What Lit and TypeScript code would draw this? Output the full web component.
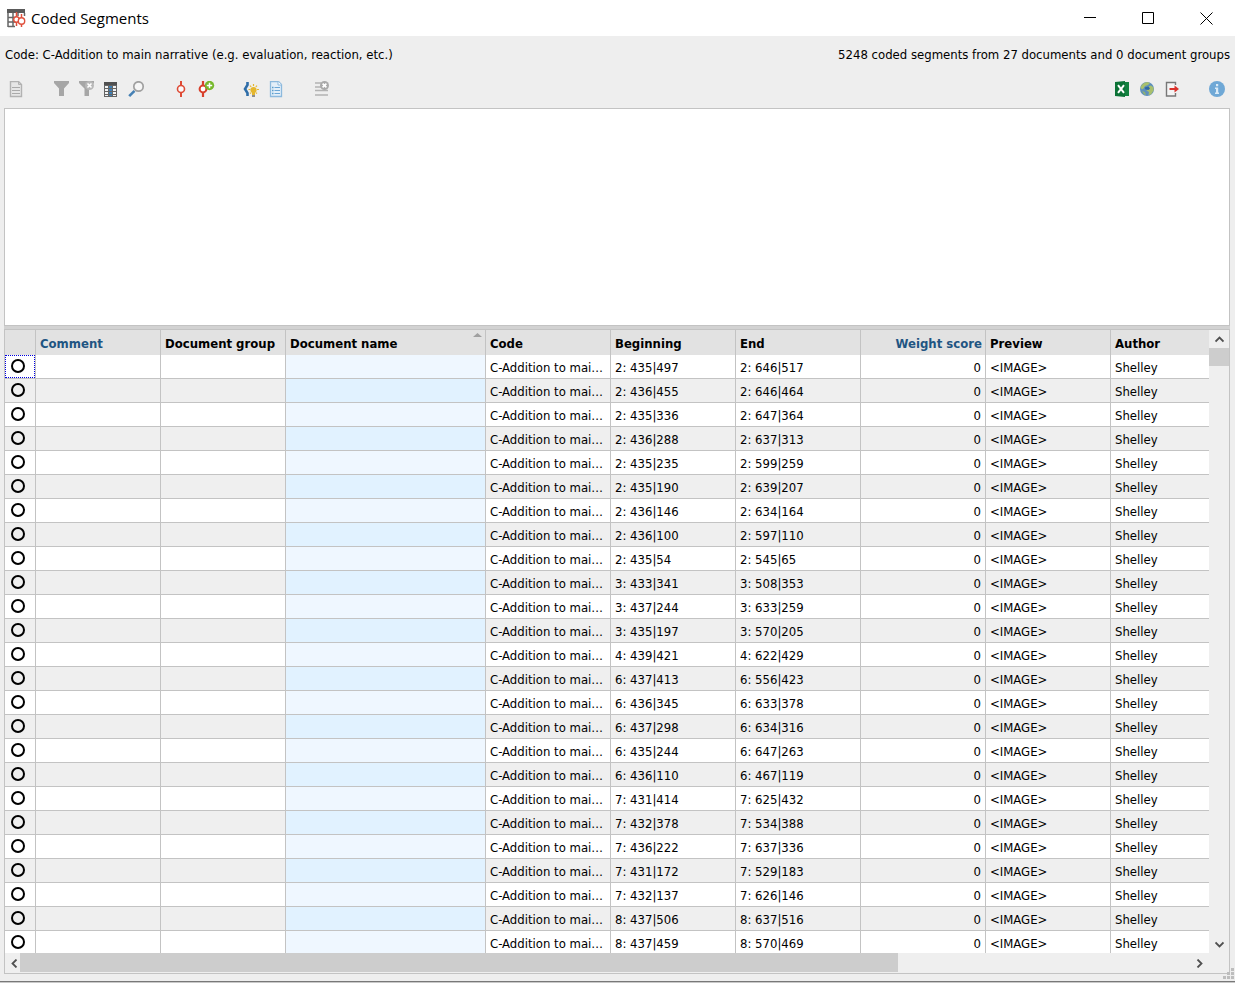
import { LitElement, html, css, svg, nothing } from "lit";
import { customElement, state } from "lit/decorators.js";

interface Segment {
  begin: string;
  end: string;
}

const SEGMENTS: Segment[] = [
  ["2: 435|497", "2: 646|517"],
  ["2: 436|455", "2: 646|464"],
  ["2: 435|336", "2: 647|364"],
  ["2: 436|288", "2: 637|313"],
  ["2: 435|235", "2: 599|259"],
  ["2: 435|190", "2: 639|207"],
  ["2: 436|146", "2: 634|164"],
  ["2: 436|100", "2: 597|110"],
  ["2: 435|54", "2: 545|65"],
  ["3: 433|341", "3: 508|353"],
  ["3: 437|244", "3: 633|259"],
  ["3: 435|197", "3: 570|205"],
  ["4: 439|421", "4: 622|429"],
  ["6: 437|413", "6: 556|423"],
  ["6: 436|345", "6: 633|378"],
  ["6: 437|298", "6: 634|316"],
  ["6: 435|244", "6: 647|263"],
  ["6: 436|110", "6: 467|119"],
  ["7: 431|414", "7: 625|432"],
  ["7: 432|378", "7: 534|388"],
  ["7: 436|222", "7: 637|336"],
  ["7: 431|172", "7: 529|183"],
  ["7: 432|137", "7: 626|146"],
  ["8: 437|506", "8: 637|516"],
  ["8: 437|459", "8: 570|469"],
].map(([begin, end]) => ({ begin, end }));

const COLUMNS = [
  { label: "Comment", cls: "editable" },
  { label: "Document group", cls: "" },
  { label: "Document name", cls: "sorted" },
  { label: "Code", cls: "" },
  { label: "Beginning", cls: "" },
  { label: "End", cls: "" },
  { label: "Weight score", cls: "editable num" },
  { label: "Preview", cls: "" },
  { label: "Author", cls: "" },
];

const ICONS = {
  document: svg`<path d="M2.5 .5h8l3 3v12h-11z" fill="#e6e6e6" stroke="#b2b2b2" stroke-width="1.4"/><path d="M10.5 .5v3h3" fill="none" stroke="#b2b2b2"/><path d="M4 6.500h8M4 9.500h8M4 12.500h8" stroke="#aaa" stroke-width="1.2"/>`,
  filter: svg`<path d="M1 0h15v2l-5 5.500V15H6V7.500L1 2z" fill="#a6a6a6"/>`,
  clearFilter: svg`<path d="M1 0h15v2l-5 5.500V15H6.500V7.500L1 2z" fill="#a6a6a6"/><circle cx="11.500" cy="4.500" r="4.500" fill="#b8b8b8"/><path d="M9.500 2.500l4 4m0-4l-4 4" stroke="#fff" stroke-width="1.600"/>`,
  columns: svg`<path d="M1 1h13v15H1z" fill="#646464"/><path d="M1 1h13v3H1z" fill="#505050"/><path d="M2 5h3v2H2zM2 8h3v2H2zM2 11h3v2H2zM2 14h3v1H2zM10 5h3v2h-3zM10 8h3v2h-3zM10 11h3v2h-3zM10 14h3v1h-3z" fill="#f2f2f2"/><path d="M6 5h3v2H6zM6 8h3v2H6zM6 11h3v2H6zM6 14h3v1H6z" fill="#3d7fb5"/>`,
  search: svg`<path d="M1.200 15.200L6.500 9.800" stroke="#4580b4" stroke-width="2.600"/><circle cx="10.500" cy="5.500" r="4.700" fill="#f6f6f6" stroke="#a0a0a0" stroke-width="1.700"/>`,
  code: svg`<path d="M8 0v4M8 12v4" stroke="#de4a35" stroke-width="2"/><circle cx="8" cy="8" r="3.500" fill="#fafafa" stroke="#de4a35" stroke-width="1.600"/>`,
  addCode: svg`<path d="M5 0v4M5 12v4" stroke="#d8402b" stroke-width="2.200"/><circle cx="5" cy="8" r="3.400" fill="#fff" stroke="#d8402b" stroke-width="2"/><circle cx="11.500" cy="4.500" r="4.700" fill="#76b82a"/><path d="M8.800 4.500h5.400M11.500 1.800v5.400" stroke="#fff" stroke-width="1.500"/>`,
  creative: svg`<path d="M4.500 1v3L2 8l2.500 4v3" fill="none" stroke="#2f6da8" stroke-width="2.600"/><circle cx="10.500" cy="9" r="3.100" fill="#e5b72d"/><path d="M9 11h3v3H9z" fill="#e5b72d"/><path d="M9 14h3v2H9z" fill="#8d8d8d"/><path d="M10.500 3v2M5.500 8.500h1.700M14 8.500h2M7 4.700l1.200 1.200M14 4.700l-1.200 1.200M7 12.500l1-.8M14 12.500l-1-.8" stroke="#e5b72d" stroke-width="1.200"/>`,
  summary: svg`<path d="M2.500 .5h8l3 3v12h-11z" fill="#e3eff9" stroke="#8cb9dd" stroke-width="1.300"/><path d="M10 .5v3.500h3.500" fill="#fff" stroke="#8cb9dd"/><path d="M4 6.500h1.500M4 9.500h1.500M4 12.500h1.500" stroke="#5b9ccc" stroke-width="1.600"/><path d="M6.500 6.500h5.500M6.500 9.500h5.500M6.500 12.500h5.500" stroke="#6ca7d6"/>`,
  removeRows: svg`<path d="M2 2h6M2 6h6M2 9.500h13M2 14h13" stroke="#b2b2b2" stroke-width="1.700"/><circle cx="11.500" cy="4.500" r="4.500" fill="#a9a9a9"/><path d="M9.600 2.600l3.800 3.800m0-3.800L9.600 6.400" stroke="#fff" stroke-width="1.700"/>`,
  excel: svg`<path d="M1 1L11 0v16L1 15z" fill="#0b7236"/><path d="M11 1h4v14h-4z" fill="#12813f"/><path d="M4 4.200l6 7.600M10 4.200l-6 7.600" stroke="#fff" stroke-width="2"/>`,
  globe: svg`<circle cx="8" cy="8" r="7" fill="#5e90bd"/><path d="M1.500 6.500C2.500 3.500 5 1.500 8 1l3 1-2 2-3 1-1 2-2 1.500zM9.500 5.500l2.500-1 2.500 2v3l-2.500 4-2.500.5.5-3-2.500-1.500z" fill="#a9c06c"/><path d="M3 10l3 1 1 3-2-.5z" fill="#8fb274"/><path d="M5.500 6.500l4-1 1.500 2-1.500 1.500-3-.5z" fill="#2f67a3"/>`,
  exportIcon: svg`<path d="M11.500 4V1.500h-9v13.500h9V12" fill="#f4f4f4" stroke="#777" stroke-width="1.400"/><path d="M5.500 8h6" stroke="#d9302a" stroke-width="2"/><path d="M10.500 4.500L15 8l-4.500 3.500z" fill="#d9302a"/>`,
  info: svg`<circle cx="8" cy="8" r="8" fill="#6fa8d6"/><path d="M7 3h2.200v2.200H7zM6 6.500h3.200v5H10V13H6v-1.500h1V8H6z" fill="#d9eaf7"/>`,
};

type IconName = keyof typeof ICONS;

@customElement("tool-button")
export class ToolButton extends LitElement {
  static properties = {
    icon: { type: String },
    label: { type: String },
  };

  declare icon: IconName;
  declare label: string;

  static styles = css`
    :host {
      display: block;
    }
    button {
      display: grid;
      place-items: center;
      width: 25px;
      height: 25px;
      padding: 0;
      border: 0;
      background: none;
    }
    button:hover {
      background: #dcdcdc;
    }
    svg {
      display: block;
      width: 17px;
      height: 17px;
    }
  `;

  render() {
    return html`<button type="button" aria-label=${this.label} title=${this.label}>
      <svg viewBox="0 0 17 17" aria-hidden="true">${ICONS[this.icon]}</svg>
    </button>`;
  }
}

@customElement("app-root")
export class AppRoot extends LitElement {
  @state() private selected = -1;

  static styles = css`
    :host {
      display: flex;
      flex-direction: column;
      box-sizing: border-box;
      height: 100vh;
      background: #eeeeee;
      color: #000;
      font: 13px/16px "DejaVu Sans Condensed", Tahoma, "DejaVu Sans", sans-serif;
    }
    .titlebar {
      display: flex;
      align-items: center;
      height: 36px;
      padding-left: 7px;
      background: #fff;
    }
    .titlebar h1 {
      flex: 1;
      margin: 0;
      padding-left: 5px;
      font: 400 15px/20px "Open Sans", "Noto Sans", sans-serif;
    }
    .app-icon {
      display: block;
      width: 19px;
      height: 20px;
    }
    .window-button {
      display: grid;
      place-items: center;
      width: 58px;
      height: 34px;
      padding: 0;
      border: 0;
      background: none;
    }
    .window-button svg {
      display: block;
      width: 13px;
      height: 13px;
    }
    .summary {
      display: flex;
      justify-content: space-between;
      gap: 20px;
      padding: 11px 5px 10px;
    }
    .summary p {
      margin: 0;
    }
    .toolbar {
      display: flex;
      justify-content: space-between;
      padding: 4px 5px 6px 4px;
    }
    .tools {
      display: flex;
      gap: 20px;
    }
    .group {
      display: flex;
    }
    .preview {
      flex: none;
      height: 22vh;
      margin: 0 5px 0 4px;
      border: 1px solid #c3c3c3;
      background: #fff;
    }
    .splitter {
      height: 3px;
      margin: 0 5px 0 4px;
      background: #d2d2d2;
    }
    .grid {
      flex: 1;
      min-height: 0;
      display: grid;
      grid-template-columns: minmax(0, 1fr) 20px;
      grid-template-rows: minmax(0, 1fr) 20px;
      margin: 0 5px 0 4px;
      border: 1px solid #c3c3c3;
    }
    .viewport {
      overflow: hidden;
    }
    table {
      width: 100%;
      table-layout: fixed;
      border-collapse: separate;
      border-spacing: 0;
    }
    .col-mark {
      width: 31px;
    }
    .col {
      width: 125px;
    }
    .col-name {
      width: 200px;
    }
    .col-rest {
      width: auto;
    }
    th,
    td {
      box-sizing: border-box;
      padding: 2px 2px 0 4px;
      border-right: 1px solid #c3c3c3;
      text-align: left;
      white-space: nowrap;
      overflow: hidden;
    }
    th:last-child,
    td:last-child {
      border-right: 0;
    }
    th {
      height: 25px;
      background: #e2e2e2;
      font-weight: 700;
    }
    td {
      height: 24px;
      border-bottom: 1px solid #c3c3c3;
      background: #fff;
    }
    tbody tr:nth-child(even) td {
      background: #efefef;
    }
    tbody tr td.name {
      background: #eff7ff;
    }
    tbody tr:nth-child(even) td.name {
      background: #e1f2ff;
    }
    .num {
      padding-right: 4px;
      text-align: right;
    }
    th.num {
      padding-right: 3px;
    }
    .editable {
      color: #1f5582;
    }
    th.sorted {
      position: relative;
    }
    .sort {
      position: absolute;
      top: 3px;
      right: 3px;
      width: 9px;
      height: 4px;
    }
    td.mark {
      padding: 0;
    }
    .mark label {
      display: grid;
      align-items: center;
      box-sizing: border-box;
      height: 23px;
      padding: 0 0 1px 5px;
      border: 1px solid transparent;
    }
    .mark .current {
      border: 1px dotted #0000e0;
    }
    .mark input {
      appearance: none;
      box-sizing: border-box;
      width: 14px;
      height: 14px;
      margin: 0;
      border: 2px solid #000;
      border-radius: 50%;
    }
    .mark input:checked {
      background: #000;
    }
    .scroll {
      display: flex;
      background: #efefef;
    }
    .scroll.vertical {
      flex-direction: column;
    }
    .scroll.horizontal {
      grid-column: 1;
    }
    .scroll button {
      display: grid;
      place-items: center;
      flex: none;
      padding: 0;
      border: 0;
      background: none;
    }
    .vertical button {
      height: 18px;
    }
    .horizontal button {
      width: 15px;
      padding-left: 3px;
    }
    .horizontal button:last-child {
      width: 19px;
      padding-left: 0;
    }
    .scroll svg {
      display: block;
      width: 9px;
      height: 9px;
    }
    .track {
      flex: 1;
      min-width: 0;
      min-height: 0;
    }
    .thumb {
      background: #cdcdcd;
    }
    .vertical .thumb {
      height: 18px;
    }
    .horizontal .thumb {
      width: 75%;
      height: 19px;
    }
    .corner {
      background: #efefef;
    }
    .statusbar {
      position: relative;
      height: 7px;
      border-bottom: 1px solid #787878;
    }
    .grip {
      position: absolute;
      right: 1px;
      bottom: 2px;
      width: 11px;
      height: 11px;
    }
    .backdrop {
      height: 1px;
      background: #c9c9c9;
    }
  `;

  private arrow(d: string) {
    return html`<svg viewBox="0 0 9 9" aria-hidden="true">
      <path d=${d} fill="none" stroke="#505050" stroke-width="1.8" />
    </svg>`;
  }

  private row(s: Segment, i: number) {
    return html`<tr>
      <td class="mark">
        <label class=${i === 0 ? "current" : ""}>
          <input
            type="radio"
            name="segment"
            aria-label="Segment ${s.begin}"
            .checked=${this.selected === i}
            @change=${() => (this.selected = i)}
          />
        </label>
      </td>
      <td></td>
      <td></td>
      <td class="name"></td>
      <td>C-Addition to mai…</td>
      <td>${s.begin}</td>
      <td>${s.end}</td>
      <td class="num">0</td>
      <td>&lt;IMAGE&gt;</td>
      <td>Shelley</td>
    </tr>`;
  }

  render() {
    return html`
      <header class="titlebar">
        <svg class="app-icon" viewBox="0 0 19 20" aria-hidden="true">
          <path d="M0 1h18v4H0z" fill="#5a5a5a" />
          <path
            d="M1 5v14M6 5v14M1 9.500h10M1 14h8M1 18.500h7M11 5v3M17.500 5v3"
            fill="none"
            stroke="#666"
            stroke-width="1.500"
          />
          <path
            d="M9.500 4v5M9.500 14v4M14.500 6v4M14.500 16v3"
            stroke="#e0503c"
            stroke-width="1.500"
          />
          <circle cx="9.500" cy="11.500" r="2.800" fill="#fff" stroke="#e0503c" stroke-width="1.400" />
          <circle cx="14.500" cy="13" r="3.200" fill="#fff" stroke="#e0503c" stroke-width="1.400" />
        </svg>
        <h1>Coded Segments</h1>
        <button class="window-button" type="button" aria-label="Minimize">
          <svg viewBox="0 0 13 13"><path d="M0 5.500h12" stroke="#000" /></svg>
        </button>
        <button class="window-button" type="button" aria-label="Maximize">
          <svg viewBox="0 0 13 13"><path d="M.5 .5h11v11H.5z" fill="none" stroke="#000" /></svg>
        </button>
        <button class="window-button" type="button" aria-label="Close">
          <svg viewBox="0 0 13 13"><path d="M.5 .5l12 12M12.500 .5l-12 12" stroke="#000" /></svg>
        </button>
      </header>
      <div class="summary">
        <p>Code: C-Addition to main narrative (e.g. evaluation, reaction, etc.)</p>
        <p>5248 coded segments from 27 documents and 0 document groups</p>
      </div>
      <div class="toolbar" role="toolbar" aria-label="Segment tools">
        <div class="tools">
          <div class="group"><tool-button icon="document" label="Display document"></tool-button></div>
          <div class="group">
            <tool-button icon="filter" label="Filter"></tool-button>
            <tool-button icon="clearFilter" label="Reset filters"></tool-button>
            <tool-button icon="columns" label="Select columns"></tool-button>
            <tool-button icon="search" label="Search"></tool-button>
          </div>
          <div class="group">
            <tool-button icon="code" label="Code"></tool-button>
            <tool-button icon="addCode" label="New code"></tool-button>
          </div>
          <div class="group">
            <tool-button icon="creative" label="Categorize"></tool-button>
            <tool-button icon="summary" label="Summary"></tool-button>
          </div>
          <div class="group"><tool-button icon="removeRows" label="Delete"></tool-button></div>
        </div>
        <div class="tools">
          <div class="group">
            <tool-button icon="excel" label="Excel"></tool-button>
            <tool-button icon="globe" label="HTML"></tool-button>
            <tool-button icon="exportIcon" label="Export"></tool-button>
          </div>
          <div class="group"><tool-button icon="info" label="Help"></tool-button></div>
        </div>
      </div>
      <section class="preview" aria-label="Segment preview"></section>
      <div class="splitter" role="separator"></div>
      <div class="grid">
        <div class="viewport">
          <table>
            <colgroup>
              <col class="col-mark" />
              <col class="col" />
              <col class="col" />
              <col class="col-name" />
              <col class="col" />
              <col class="col" />
              <col class="col" />
              <col class="col" />
              <col class="col" />
              <col class="col-rest" />
            </colgroup>
            <thead>
              <tr>
                <th></th>
                ${COLUMNS.map(
                  (c) => html`<th class=${c.cls} scope="col">
                    ${c.label}${c.cls === "sorted"
                      ? html`<svg class="sort" viewBox="0 0 9 4"><path d="M0 4L4.500 0 9 4z" fill="#a0a0a0" /></svg>`
                      : nothing}
                  </th>`
                )}
              </tr>
            </thead>
            <tbody>
              ${SEGMENTS.map((s, i) => this.row(s, i))}
            </tbody>
          </table>
        </div>
        <div class="scroll vertical">
          <button type="button" aria-label="Scroll up">${this.arrow("M.5 6.500l4-4 4 4")}</button>
          <div class="track"><div class="thumb"></div></div>
          <button type="button" aria-label="Scroll down">${this.arrow("M.5 2.500l4 4 4-4")}</button>
        </div>
        <div class="scroll horizontal">
          <button type="button" aria-label="Scroll left">${this.arrow("M6.500 .5l-4 4 4 4")}</button>
          <div class="track"><div class="thumb"></div></div>
          <button type="button" aria-label="Scroll right">${this.arrow("M2.500 .5l4 4-4 4")}</button>
        </div>
        <div class="corner"></div>
      </div>
      <footer class="statusbar">
        <svg class="grip" viewBox="0 0 11 11" aria-hidden="true">
          <path
            d="M8 0h3v3H8zM8 4h3v3H8zM8 8h3v3H8zM4 4h3v3H4zM4 8h3v3H4zM0 8h3v3H0z"
            fill="#bdbdbd"
          />
        </svg>
      </footer>
      <div class="backdrop"></div>
    `;
  }
}
